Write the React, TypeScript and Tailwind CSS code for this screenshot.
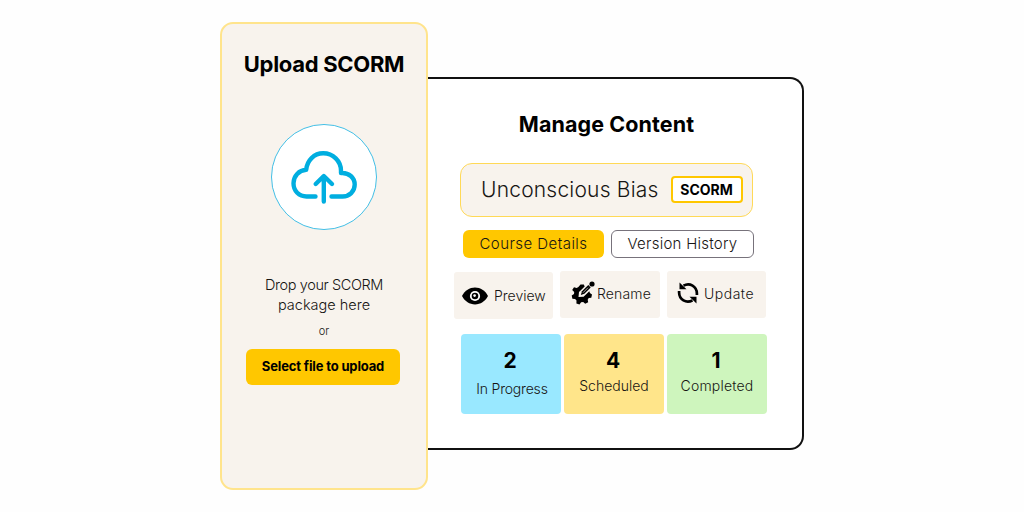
import React from 'react';

// Cloud outline with an upload arrow
const CloudUploadIcon = () => (
    <svg width="66" height="54" viewBox="0 0 66 54" fill="none" stroke="#00aee0" strokeWidth="4.4" strokeLinecap="round" strokeLinejoin="round">
        <path d="M24.5 46.5H15.5C8 46.5 2.5 41 2.5 33.3C2.5 26 8 20.2 15.2 19.8C16 10.5 23 3.3 32.2 3.3C42 3.3 50 10.8 50 20.8V23C58 22.3 63.7 27.8 63.7 34.6C63.7 41.5 58.5 46.5 51.5 46.5H40.5" />
        <path d="M32.8 51.5V26.5M24.7 34L32.8 26L41 34" />
    </svg>
);

const EyeIcon = () => (
    <svg width="26" height="18" viewBox="0 0 26 18">
        <path fill="#000" d="M0 9C3 3.5 7.500.6 13 .6S23 3.500 26 9C23 14.500 18.500 17.400 13 17.400S3 14.500 0 9Z" />
        <circle cx="13" cy="9" r="5.100" fill="#fff" />
        <circle cx="13" cy="9" r="3.300" fill="#000" />
        <circle cx="12.600" cy="8.600" r="1.300" fill="#fff" />
    </svg>
);

// Gear with a pencil lying over its upper right side
const GearPencilIcon = () => (
    <svg width="24" height="24" viewBox="0 0 24 24">
        <path
            fill="#000"
            d="M9.500 3.500L12.800 3.400L13.700 5.500L8 11L7.500 16L12.600 15.700L18.300 10.300L18.900 12L21 13.500L20.300 16.700L17.700 17.100L16.700 18.700L17.200 21.300L14.200 22.800L12.200 21L10.100 21.300L8.500 23.500L5.400 22.400L5.500 19.600L4.100 18.100L1.400 17.700L.7 14.500L3 13L3.200 11L1.200 9L3 6.200L5.700 6.900L7.400 6.100Z"
        />
        <path d="M9.800 13.900L11 10.300L17.300 4L19.700 6.400L13.400 12.700Z" fill="#000" />
        <circle cx="21" cy="3" r="2.600" fill="#000" />
        <path d="M12 11.700L17 6.700" stroke="#f8f3ed" strokeWidth=".7" />
    </svg>
);

const RefreshIcon = () => (
    <svg width="22" height="22" viewBox="0 0 22 22" fill="none" stroke="#000" strokeWidth="2.700">
        <path d="M6.500 3.700C12.800 .1 19.800 4.500 19.900 11.500V13" />
        <path d="M15.500 18.300C9.200 21.900 2.200 17.500 2.100 10.500V9" />
        <path d="M2.500 .5V7.300H9.500ZM19.500 21.500V14.700H12.500Z" fill="#000" stroke="none" />
    </svg>
);

interface ActionProps {
    icon: React.ReactNode;
    label: string;
    className: string;
    labelClass?: string;
}

const Action: React.FC<ActionProps> = ({ icon, label, className, labelClass = '' }) => (
    <button className={`flex h-[47px] items-center rounded-[3px] bg-[#f8f3ed] text-[14px] font-light text-[#171513] whitespace-nowrap ${className}`}>
        {icon}
        <span className={labelClass}>{label}</span>
    </button>
);

interface StatProps {
    value: number;
    label: string;
    className: string;
    labelClass: string;
}

const Stat: React.FC<StatProps> = ({ value, label, className, labelClass }) => (
    <div className={`flex h-[80px] flex-col items-center rounded-[4px] pt-[14px] whitespace-nowrap ${className}`}>
        <span className="mr-[2px] text-[21px] leading-[26px] font-bold text-black">{value}</span>
        <span className={`text-[14px] leading-[18px] font-light text-[#171513] ${labelClass}`}>{label}</span>
    </div>
);

const UploadPanel = () => (
    <section className="z-10 mt-[22px] flex h-[468px] w-[208px] shrink-0 flex-col items-center rounded-[13px] border-2 border-[#ffe48c] bg-[#f8f3ed]">
        <h2 className="mt-[26px] text-[22px] leading-[28px] font-bold tracking-[-0.3px] whitespace-nowrap text-black">Upload SCORM</h2>
        <div className="mt-[46px] flex h-[106px] w-[106px] items-center justify-center rounded-full border border-[#43bfe6] bg-white">
            <CloudUploadIcon />
        </div>
        <p className="mt-[45px] text-center text-[14.500px] leading-[20px] font-light whitespace-nowrap text-[#171513]">
            <span className="tracking-[-0.4px]">Drop your SCORM</span>
            <br />
            <span>package here</span>
        </p>
        <span className="mt-[9px] text-[11px] leading-[14px] font-light text-[#171513]">or</span>
        <button className="mt-[11px] mr-[2px] h-[36px] w-[154px] rounded-[6px] bg-[#ffc700] text-[13px] font-bold tracking-[-0.15px] whitespace-nowrap text-black">
            Select file to upload
        </button>
    </section>
);

const ManagePanel = () => (
    <section className="-ml-px mt-[77px] flex h-[373px] w-[377px] shrink-0 flex-col rounded-r-[14px] border-2 border-l-0 border-[#111] bg-white">
        <h2 className="mt-[31px] ml-[-16px] text-center text-[21.500px] leading-[28px] font-bold tracking-[0.1px] text-black">Manage Content</h2>
        <div className="mt-[25px] ml-[33px] flex h-[54px] w-[293px] items-center justify-between rounded-[12px] border-[1.5px] border-[#ffd957] bg-[#f8f3ed] pr-[9px] pl-[20px]">
            <span className="text-[21px] font-light tracking-[0.2px] whitespace-nowrap text-[#171513]">Unconscious Bias</span>
            <span className="mb-px flex h-[27px] w-[72px] items-center justify-center rounded-[4px] border-2 border-[#ffc700] bg-white pr-px text-[14px] font-bold text-black">SCORM</span>
        </div>
        <div className="mt-[13px] ml-[36px] flex gap-[7px] text-[15px] font-light whitespace-nowrap text-[#171513]">
            <button className="h-[28px] w-[141px] rounded-[6px] bg-[#ffc700] tracking-[0.45px]">Course Details</button>
            <button className="h-[28px] w-[143px] rounded-[6px] border border-[#77727b] bg-white tracking-[0.25px]">Version History</button>
        </div>
        <div className="mt-[13px] ml-[27px] flex gap-[7px]">
            <Action icon={<EyeIcon />} label="Preview" className="mt-px w-[99px] gap-[6px] pl-[8px]" labelClass="mb-px" />
            <Action icon={<GearPencilIcon />} label="Rename" className="w-[100px] gap-[2px] pb-[3px] pl-[11px]" labelClass="tracking-[0.15px]" />
            <Action icon={<RefreshIcon />} label="Update" className="w-[99px] gap-[5px] pb-[3px] pl-[10px]" labelClass="tracking-[0.5px]" />
        </div>
        <div className="mt-[15px] ml-[34px] flex gap-[3px]">
            <Stat value={2} label="In Progress" className="w-[100px] bg-[#99e8ff]" labelClass="mt-[6px] ml-[2px] tracking-[-0.2px]" />
            <Stat value={4} label="Scheduled" className="w-[100px] bg-[#ffe58a]" labelClass="mt-[3px]" />
            <Stat value={1} label="Completed" className="w-[100px] bg-[#cef5bd]" labelClass="mt-[3px] tracking-[0.2px]" />
        </div>
    </section>
);

export default function App() {
    return (
        <main className="flex h-[512px] w-[1024px] items-start overflow-hidden bg-[#fefefe] pl-[220px] font-['Inter',sans-serif]">
            <UploadPanel />
            <ManagePanel />
        </main>
    );
}
